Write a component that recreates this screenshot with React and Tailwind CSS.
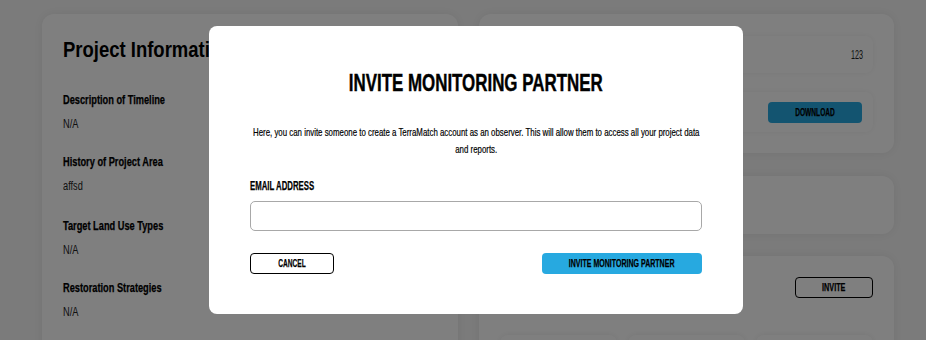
export default function App() {
  const items = [
    ["Description of Timeline", "N/A"],
    ["History of Project Area", "affsd"],
    ["Target Land Use Types", "N/A"],
    ["Restoration Strategies", "N/A"],
  ];
  return (
    <div className="relative h-[340px] w-[926px] overflow-hidden bg-[#f7f7f7] font-['Liberation_Sans',sans-serif] text-black">
      <div className="flex gap-[21px] pl-[42px] pt-[14px]">
        <div className="h-[400px] w-[416px] shrink-0 rounded-xl bg-white px-[21px] pt-[22px] shadow-[0_0_12px_rgba(0,0,0,0.07)]">
          <h2 className="h-[28px] whitespace-nowrap text-[22px] font-bold leading-[28px]">
            <span className="inline-block origin-left scale-x-[0.84]">Project Information</span>
          </h2>
          <div className="mt-[28px] flex flex-col">
            {items.map(([l, v], i) => (
              <div key={l} className={i === 0 ? "" : i === 2 ? "mt-[24px]" : "mt-[22px]"}>
                <div className="whitespace-nowrap text-[12px] font-bold leading-[16px] [-webkit-text-stroke:0.25px_black]">
                  <span className="inline-block origin-left scale-x-[0.77]">{l}</span>
                </div>
                <div className="mt-[8px] whitespace-nowrap text-[12px] leading-[16px] text-[#222]">
                  <span className="inline-block origin-left scale-x-[0.77]">{v}</span>
                </div>
              </div>
            ))}
          </div>
        </div>
        <div className="flex w-[415px] shrink-0 flex-col">
          <div className="flex flex-col gap-[19px] rounded-xl bg-white px-[21px] pb-[21px] pt-[22px] shadow-[0_0_12px_rgba(0,0,0,0.07)]">
            <div className="flex h-[37px] items-center justify-between rounded-lg bg-white pl-3 pr-[10px] shadow-[0_0_6px_rgba(0,0,0,0.06)]">
              <span className="text-[12px] font-bold">Total Hectares</span>
              <span className="inline-block origin-right scale-x-[0.6] text-[12px] text-[#222]">123</span>
            </div>
            <div className="flex h-[40px] items-center justify-between rounded-lg bg-white pl-3 pr-[11px] shadow-[0_0_6px_rgba(0,0,0,0.06)]">
              <span className="text-[12px] font-bold">Project Report</span>
              <button className="flex h-[21px] w-[94px] items-center justify-center rounded-[4px] bg-[#27a9e0] text-[11px] font-bold [-webkit-text-stroke:0.25px_black]">
                <span className="inline-block scale-x-[0.6]">DOWNLOAD</span>
              </button>
            </div>
          </div>
          <div className="mt-[23px] h-[58px] rounded-xl bg-white shadow-[0_0_12px_rgba(0,0,0,0.07)]"></div>
          <div className="mt-[22px] h-[120px] rounded-xl bg-white px-[21px] pt-[21px] shadow-[0_0_12px_rgba(0,0,0,0.07)]">
            <div className="flex h-[21px] items-center justify-between">
              <span className="text-[14px] font-bold">Monitoring Partners</span>
              <button className="flex h-[21px] w-[78px] items-center justify-center rounded-[4px] border-[1.5px] border-black text-[11px] font-bold [-webkit-text-stroke:0.25px_black]">
                <span className="inline-block scale-x-[0.66]">INVITE</span>
              </button>
            </div>
            <div className="mt-[37px] grid grid-cols-3 gap-[11px]">
              <div className="h-[60px] rounded-lg bg-white shadow-[0_0_6px_rgba(0,0,0,0.08)]"></div>
              <div className="h-[60px] rounded-lg bg-white shadow-[0_0_6px_rgba(0,0,0,0.08)]"></div>
              <div className="h-[60px] rounded-lg bg-white shadow-[0_0_6px_rgba(0,0,0,0.08)]"></div>
            </div>
          </div>
        </div>
      </div>

      <div className="absolute inset-0 bg-black/50">
        <div className="absolute left-[209px] top-[26px] flex w-[534px] flex-col items-center rounded-lg bg-white px-[41px] pb-[40px] pt-[43px]">
          <h1 className="h-[28px] scale-x-[0.735] whitespace-nowrap text-[23px] font-bold leading-[28px] [-webkit-text-stroke:0.4px_black]">
            INVITE MONITORING PARTNER
          </h1>
          <p className="mt-[27px] w-max scale-x-[0.715] whitespace-nowrap text-center text-[11px] leading-[17px] text-black [-webkit-text-stroke:0.2px_black]">
            Here, you can invite someone to create a TerraMatch account as an observer. This will allow them to access all your project data
            <br />
            and reports.
          </p>
          <div className="mt-[20px] self-stretch">
            <label className="block whitespace-nowrap text-[12px] font-bold leading-[16px] [-webkit-text-stroke:0.25px_black]">
              <span className="inline-block origin-left scale-x-[0.65]">EMAIL ADDRESS</span>
            </label>
            <input className="mt-[7px] block h-[30px] w-full rounded-[5px] border border-[#a8a8a8] bg-white outline-none" />
            <div className="mt-[22px] flex justify-between">
              <button className="flex h-[21px] w-[84px] items-center justify-center rounded-[4px] border-[1.5px] border-black text-[11px] font-bold [-webkit-text-stroke:0.25px_black]">
                <span className="inline-block scale-x-[0.6]">CANCEL</span>
              </button>
              <button className="flex h-[21px] w-[160px] items-center justify-center rounded-[4px] bg-[#27a9e0] text-[11px] font-bold [-webkit-text-stroke:0.25px_black]">
                <span className="inline-block whitespace-nowrap scale-x-[0.64]">INVITE MONITORING PARTNER</span>
              </button>
            </div>
          </div>
        </div>
      </div>
    </div>
  );
}
